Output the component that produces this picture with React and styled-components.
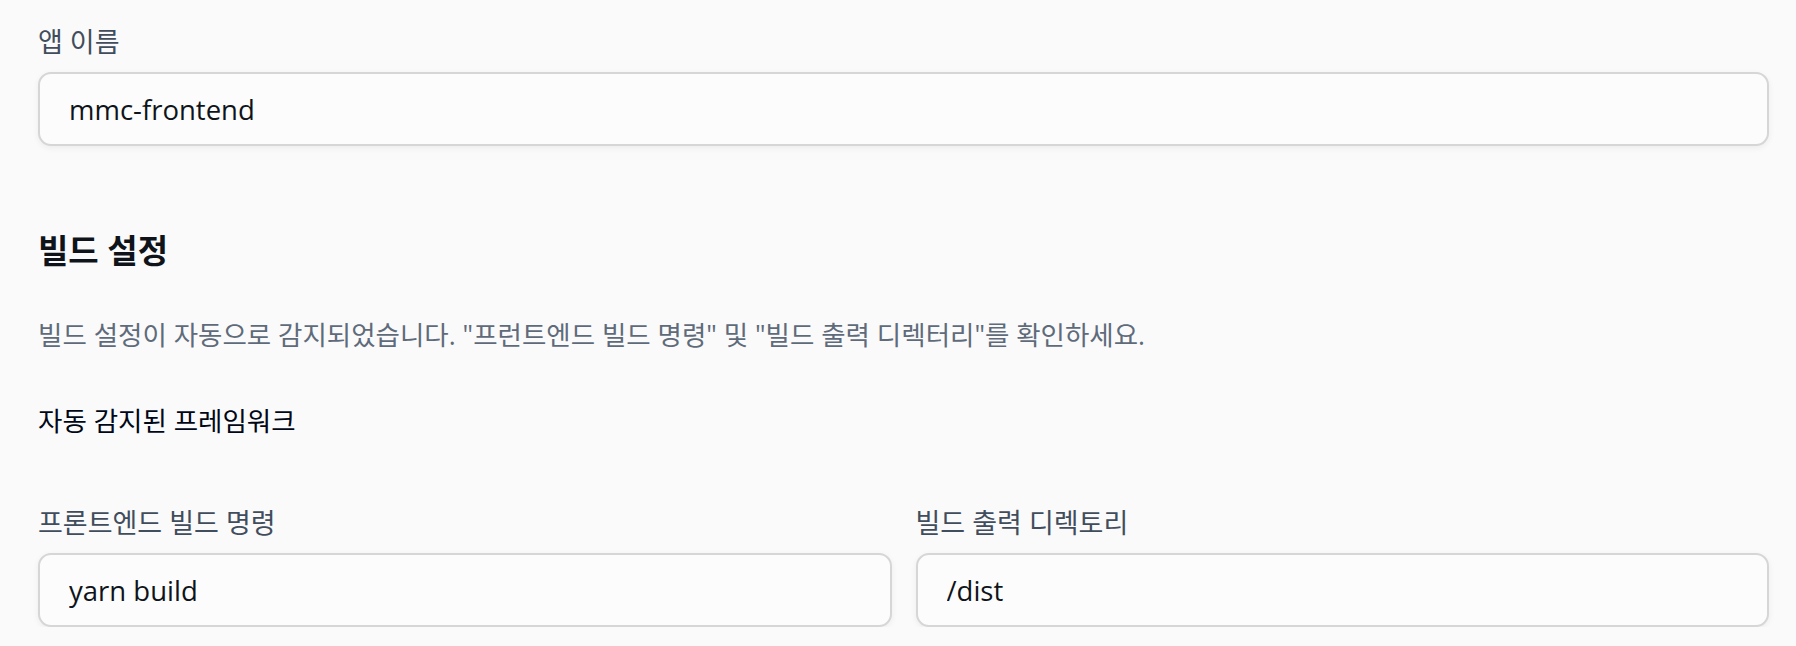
import React from 'react';
import styled, { createGlobalStyle } from 'styled-components';

const GlobalStyle = createGlobalStyle`
  html, body {
    margin: 0;
    padding: 0;
    background-color: #fafafa;
  }
  body {
    font-family: "Open Sans", "Noto Sans CJK KR", sans-serif;
    color: #000716;
  }
`;

const Page = styled.div`
  display: flex;
  flex-direction: column;
  padding: 25px 27px 0px 38px;
`;

const Field = styled.div`
  display: flex;
  flex-direction: column;
  gap: 13px;
`;

const Label = styled.label`
  font-size: 27px;
  line-height: 34px;
  color: #414d5c;
`;

const Input = styled.input`
  box-sizing: border-box;
  width: 100%;
  height: 74px;
  padding: 0px 29px;
  border: 2px solid #d6d6d6;
  border-radius: 13px;
  background-color: #fcfcfc;
  box-shadow: 0px 2px 6px rgba(0, 0, 0, 0.06);
  font-family: "Open Sans", "Noto Sans CJK KR", sans-serif;
  font-size: 27.5px;
  color: #0f141a;
  outline: none;
`;

const Section = styled.section`
  display: flex;
  flex-direction: column;
  margin-top: 83px;
`;

const Heading = styled.h2`
  margin: 0px;
  font-size: 33px;
  line-height: 44px;
  font-weight: 700;
  color: #0f141a;
`;

const Description = styled.p`
  margin: 44px 0px 0px 0px;
  font-size: 26.5px;
  line-height: 36px;
  color: #5f6b7a;
`;

const Framework = styled.div`
  margin-top: 50px;
  font-size: 26.5px;
  line-height: 36px;
  color: #000716;
`;

const Columns = styled.div`
  display: grid;
  grid-template-columns: 1fr 1fr;
  column-gap: 24px;
  margin-top: 67px;
`;

const App = () => {
  return (
    <Page>
      <GlobalStyle />
      <Field>
        <Label>앱 이름</Label>
        <Input defaultValue="mmc-frontend" />
      </Field>
      <Section>
        <Heading>빌드 설정</Heading>
        <Description>
          빌드 설정이 자동으로 감지되었습니다. "프런트엔드 빌드 명령" 및 "빌드 출력 디렉터리"를 확인하세요.
        </Description>
        <Framework>자동 감지된 프레임워크</Framework>
        <Columns>
          <Field>
            <Label>프론트엔드 빌드 명령</Label>
            <Input defaultValue="yarn build" />
          </Field>
          <Field>
            <Label>빌드 출력 디렉토리</Label>
            <Input defaultValue="/dist" />
          </Field>
        </Columns>
      </Section>
    </Page>
  );
};

export default App;
